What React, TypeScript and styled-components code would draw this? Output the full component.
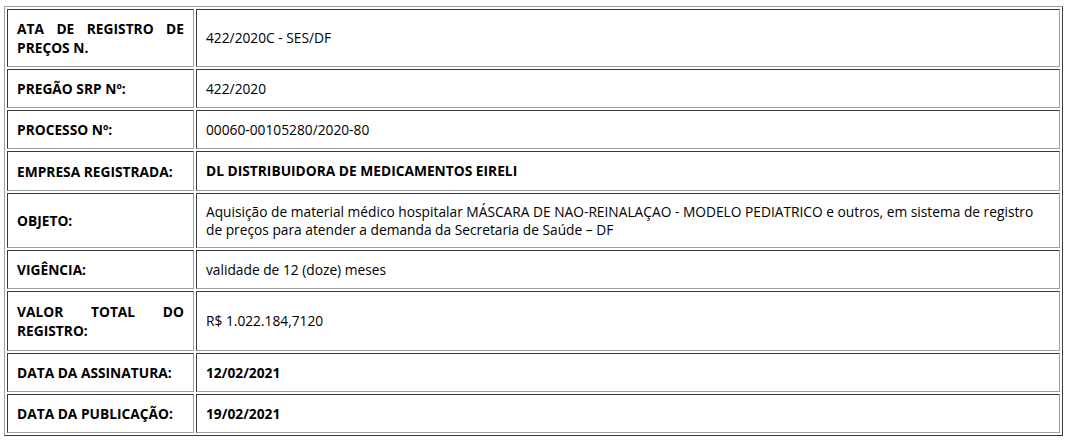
import React from 'react';
import styled, { createGlobalStyle } from 'styled-components';

const GlobalStyle = createGlobalStyle`
	html, body {
		margin: 0;
		padding: 0;
		background: #fff;
	}
	body {
		font-family: 'Open Sans', 'Liberation Sans', sans-serif;
		color: #000;
	}
`;

const Page = styled.div`
	padding: 6px 4px;
`;

const Table = styled.table`
	width: 1059px;
	border-collapse: separate;
	border-spacing: 2px;
	border: 1px solid;
	border-color: #a0a0a0 #3a3a3a #3a3a3a #a0a0a0;
	font-size: 13.75px;
`;

const Cell = styled.td<{ $strong?: boolean; $label?: boolean; $height: number }>`
	height: ${(p) => p.$height}px;
	box-sizing: border-box;
	padding: 0 9px;
	border: 1px solid;
	border-color: #3a3a3a #a0a0a0 #a0a0a0 #3a3a3a;
	vertical-align: middle;
	font-weight: ${(p) => (p.$strong ? 700 : 400)};
	line-height: ${(p) => (p.$label ? '19px' : '17.5px')};
	text-align: ${(p) => (p.$label ? 'justify' : 'left')};
	width: ${(p) => (p.$label ? '187px' : 'auto')};
	color: #000;
`;

type Row = { label: string; value: string; bold?: boolean; height: number };

const rows: Row[] = [
	{ label: 'ATA DE REGISTRO DE PREÇOS N.', value: '422/2020C - SES/DF', height: 58 },
	{ label: 'PREGÃO SRP Nº:', value: '422/2020', height: 39 },
	{ label: 'PROCESSO Nº:', value: '00060-00105280/2020-80', height: 39 },
	{ label: 'EMPRESA REGISTRADA:', value: 'DL DISTRIBUIDORA DE MEDICAMENTOS EIRELI', bold: true, height: 40 },
	{
		label: 'OBJETO:',
		value:
			'Aquisição de material médico hospitalar MÁSCARA DE NAO-REINALAÇAO - MODELO PEDIATRICO e outros, em sistema de registro de preços para atender a demanda da Secretaria de Saúde – DF',
		height: 55,
	},
	{ label: 'VIGÊNCIA:', value: 'validade de 12 (doze) meses', height: 39 },
	{ label: 'VALOR TOTAL DO REGISTRO:', value: 'R$ 1.022.184,7120', height: 60 },
	{ label: 'DATA DA ASSINATURA:', value: '12/02/2021', bold: true, height: 39 },
	{ label: 'DATA DA PUBLICAÇÃO:', value: '19/02/2021', bold: true, height: 39 },
];

const App: React.FC = () => (
	<>
		<GlobalStyle />
		<Page>
			<Table>
				<tbody>
					{rows.map((row) => (
						<tr key={row.label}>
							<Cell $label $strong $height={row.height}>
								{row.label}
							</Cell>
							<Cell $strong={row.bold} $height={row.height}>
								{row.value}
							</Cell>
						</tr>
					))}
				</tbody>
			</Table>
		</Page>
	</>
);

export default App;
